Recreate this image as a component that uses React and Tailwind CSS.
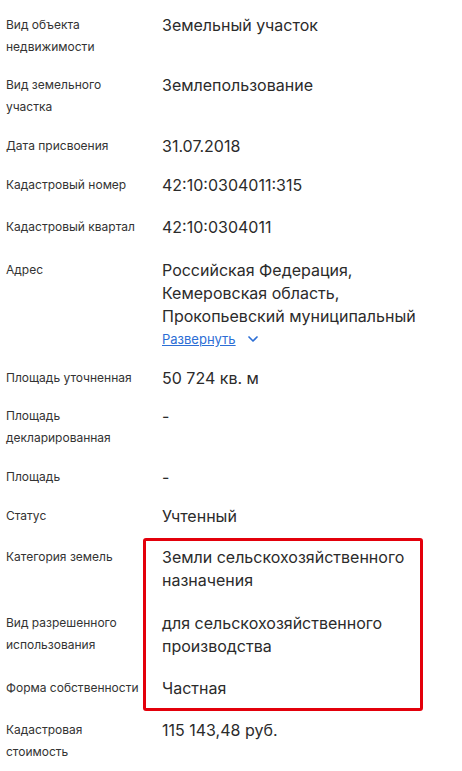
import { ChevronDown } from 'lucide-react';

const rows = [
    { label: ['Вид объекта', 'недвижимости'], value: ['Земельный участок'], gap: 'mt-0' },
    { label: ['Вид земельного', 'участка'], value: ['Землепользование'], gap: 'mt-[16px]' },
    { label: ['Дата присвоения'], value: ['31.07.2018'], gap: 'mt-[17px]' },
    { label: ['Кадастровый номер'], value: ['42:10:0304011:315'], gap: 'mt-[16px]' },
    { label: ['Кадастровый квартал'], value: ['42:10:0304011'], gap: 'mt-[19px]' },
    { label: ['Адрес'], value: ['Российская Федерация,', 'Кемеровская область,', 'Прокопьевский муниципальный'], expand: true, gap: 'mt-[20px]' },
    { label: ['Площадь уточненная'], value: ['50 724 кв. м'], gap: 'mt-[18px]' },
    { label: ['Площадь', 'декларированная'], value: ['-'], gap: 'mt-[15px]' },
    { label: ['Площадь'], value: ['-'], gap: 'mt-[17px]' },
    { label: ['Статус'], value: ['Учтенный'], gap: 'mt-[16px]' },
];

const boxed = [
    { label: ['Категория земель'], value: ['Земли сельскохозяйственного', 'назначения'], gap: 'mt-0' },
    { label: ['Вид разрешенного', 'использования'], value: ['для сельскохозяйственного', 'производства'], gap: 'mt-[20px]' },
    { label: ['Форма собственности'], value: ['Частная'], gap: 'mt-[19px]' },
];

const last = { label: ['Кадастровая', 'стоимость'], value: ['115 143,48 руб.'], gap: 'mt-[19px]' };

function Row({ row }) {
    return (
        <div className={`flex ${row.gap}`}>
            <div className="w-[156px] shrink-0 text-[12px] leading-[22px] text-[#333]">
                {row.label.map((l) => (
                    <div key={l}>{l}</div>
                ))}
            </div>
            <div className="text-[16px] leading-[23px] text-[#2b2b2b]">
                {row.value.map((v) => (
                    <div key={v}>{v}</div>
                ))}
                {row.expand && (
                    <div className="flex items-center gap-[9px] mt-[1px] text-[13px] leading-[20px] text-[#2c6ed5]">
                        <span className="underline">Развернуть</span>
                        <ChevronDown size={16} strokeWidth={2.5} />
                    </div>
                )}
            </div>
        </div>
    );
}

export default function App() {
    return (
        <div className="bg-white min-h-screen pl-[6px] pt-[14px] font-['Inter',sans-serif]">
            {rows.map((row) => (
                <Row key={row.label[0] + row.value[0]} row={row} />
            ))}
            <div className="relative mt-[18px]">
                <div className="absolute left-[137px] top-[-8px] w-[280px] h-[173px] border-[3px] border-[#e3000b] rounded-[3px] pointer-events-none" />
                {boxed.map((row) => (
                    <Row key={row.label[0]} row={row} />
                ))}
            </div>
            <Row row={last} />
        </div>
    );
}
